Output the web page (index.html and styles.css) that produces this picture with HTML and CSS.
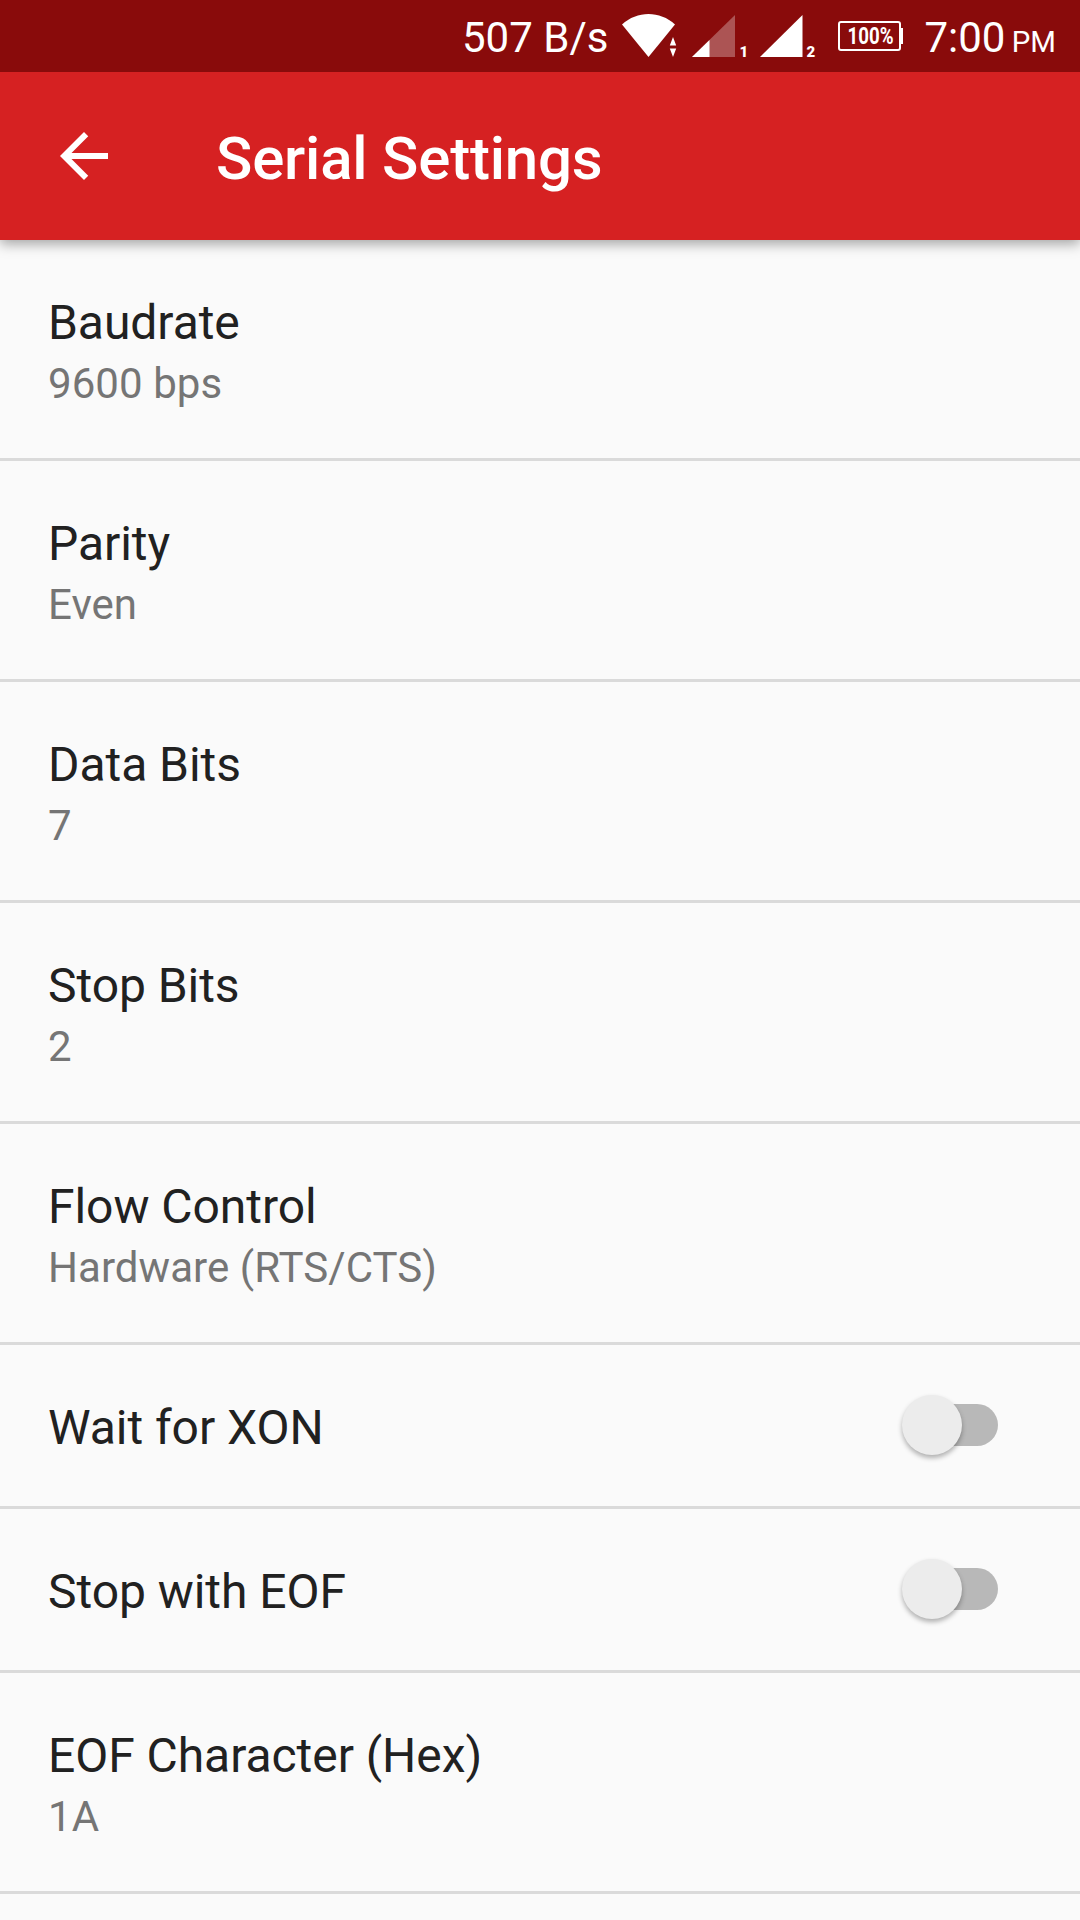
FILE: index.html
```html
<!DOCTYPE html>
<html lang="en">
<head>
    <meta charset="UTF-8">
    <meta name="viewport" content="width=device-width, initial-scale=1.0">
    <title>Serial Settings</title>
    <link rel="stylesheet" href="styles.css">
</head>
<body>
    <div class="status-bar">
        <span class="net-speed">507 B/s</span>
        <svg class="wifi-icon" width="58" height="44" viewBox="0 0 58 44">
            <path d="M0 10.500C15 -3.500 38 -3.500 53 10.500L26.500 43Z" fill="#fff"/>
            <path d="M51 23L54.200 31.500H47.800ZM47.800 34.500H54.200L51 43Z" fill="#fff"/>
        </svg>
        <svg class="signal-icon" width="60" height="50" viewBox="0 0 60 50">
            <path d="M43 1V43H0Z" fill="#fff" fill-opacity="0.3"/>
            <path d="M17.500 26V43H0Z" fill="#fff"/>
            <text class="sim" x="47.500" y="42.500">1</text>
        </svg>
        <svg class="signal-icon second" width="60" height="50" viewBox="0 0 60 50">
            <path d="M42.500 1V43H0Z" fill="#fff"/>
            <text class="sim" x="46.500" y="42.500">2</text>
        </svg>
        <svg class="battery-icon" width="66" height="30" viewBox="0 0 66 30">
            <rect x="1" y="1" width="61" height="28" rx="2" fill="none" stroke="#fff" stroke-width="2"/>
            <rect x="62" y="7" width="3" height="16" fill="#fff"/>
            <text class="level" x="9.500" y="23" textLength="46" lengthAdjust="spacingAndGlyphs">100%</text>
        </svg>
        <span class="clock">7:00 <span class="am-pm">PM</span></span>
    </div>

    <header class="toolbar">
        <button type="button" class="back" aria-label="Back">
            <svg width="72" height="72" viewBox="0 0 24 24">
                <path d="M20 11H7.830l5.590-5.590L12 4l-8 8 8 8 1.410-1.410L7.830 13H20v-2z" fill="#fff"/>
            </svg>
        </button>
        <h1>Serial Settings</h1>
    </header>

    <main class="settings">
        <div class="setting">
            <h2>Baudrate</h2>
            <p>9600 bps</p>
        </div>
        <div class="setting">
            <h2>Parity</h2>
            <p>Even</p>
        </div>
        <div class="setting">
            <h2>Data Bits</h2>
            <p>7</p>
        </div>
        <div class="setting">
            <h2>Stop Bits</h2>
            <p>2</p>
        </div>
        <div class="setting">
            <h2>Flow Control</h2>
            <p>Hardware (RTS/CTS)</p>
        </div>
        <div class="setting toggle">
            <h2>Wait for XON</h2>
            <span class="switch"><span class="thumb"></span></span>
        </div>
        <div class="setting toggle">
            <h2>Stop with EOF</h2>
            <span class="switch"><span class="thumb"></span></span>
        </div>
        <div class="setting">
            <h2>EOF Character (Hex)</h2>
            <p>1A</p>
        </div>
    </main>
</body>
</html>
```
FILE: styles.css
```css
* {
    margin: 0;
    padding: 0;
    box-sizing: border-box;
}

body {
    font-family: Roboto, "Liberation Sans", sans-serif;
    background-color: #fafafa;
    height: 1920px;
    overflow: hidden;
}

/* Status bar */
.status-bar {
    position: relative;
    z-index: 2; /* Keep the toolbar shadow below */
    display: flex;
    justify-content: flex-end;
    height: 72px;
    padding-right: 24px;
    background-color: #890b0b;
    color: #ffffff;
    font-size: 42px;
    line-height: 75px;
    white-space: nowrap;
}

.status-bar svg {
    flex: none;
}

.wifi-icon {
    margin: 14px 12px 0 14px;
}

.signal-icon {
    margin: 14px 8px 0 0;
}

.signal-icon.second {
    margin-right: 18px;
}

.sim {
    font-size: 15px;
    font-weight: 900;
    fill: #ffffff;
}

.battery-icon {
    margin: 21px 20px 0 0;
}

.level {
    font-size: 23px;
    font-weight: 700;
    fill: #ffffff;
}

.am-pm {
    margin-left: -4px;
    font-size: 29.4px;
}

/* Toolbar */
.toolbar {
    position: relative;
    display: flex;
    align-items: center;
    height: 168px;
    padding-left: 48px;
    background-color: #d62122;
    color: #ffffff;
    box-shadow: 0 4px 12px rgba(0, 0, 0, 0.35);
}

.back {
    width: 72px;
    height: 72px;
    border: none;
    background: none;
}

.toolbar h1 {
    margin-left: 96px;
    padding-top: 4px;
    font-size: 60px;
    font-weight: 500;
    letter-spacing: -0.2px;
}

/* Settings list */
.setting {
    height: 221px;
    padding: 50px 48px 0;
    border-bottom: 3px solid #dadada;
}

.setting h2 {
    font-size: 48px;
    font-weight: 400;
    line-height: 65px;
    letter-spacing: -0.05px;
    color: #212121;
}

.setting p {
    font-size: 42px;
    line-height: 57px;
    letter-spacing: 0.06px;
    color: #757575;
}

/* Rows with a switch */
.toggle {
    display: flex;
    align-items: flex-start;
    justify-content: space-between;
    height: 164px;
    padding-right: 82px;
}

.switch {
    display: flex;
    align-items: center;
    width: 90px;
    height: 42px;
    margin-top: 9px;
    border-radius: 21px;
    background-color: #b8b8b8;
}

.thumb {
    flex: none;
    width: 60px;
    height: 60px;
    margin-left: -6px;
    border-radius: 50%;
    background-color: #ececec;
    box-shadow: 0 3px 5px rgba(0, 0, 0, 0.3);
}
```
